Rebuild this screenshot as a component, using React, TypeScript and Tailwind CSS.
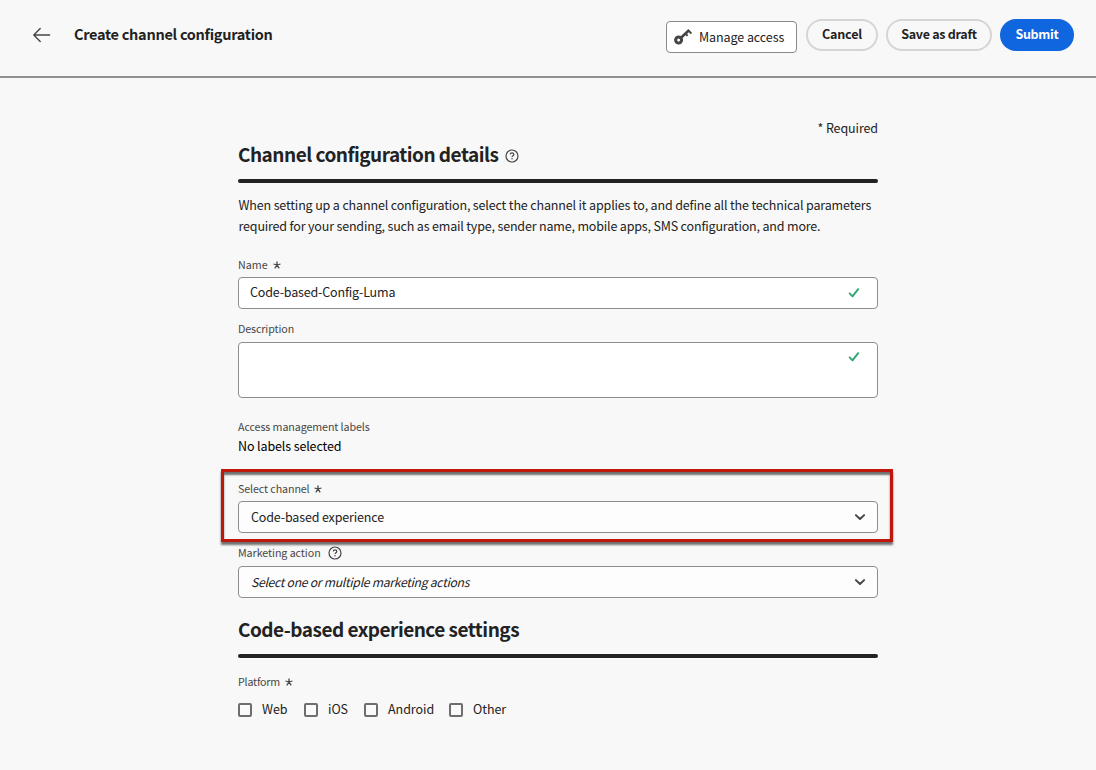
import type { ReactNode } from "react";

function HelpIcon({ className }: { className: string }) {
  return (
    <svg viewBox="0 0 14 14" className={className} fill="none" stroke="currentColor">
      <circle cx="7" cy="7" r="6" strokeWidth="1.2" />
      <path d="M5.2 5.4C5.3 4.4 6 3.9 7 3.9s1.8.6 1.8 1.5c0 1.3-1.8 1.3-1.8 2.7" strokeWidth="1.2" />
      <circle cx="7" cy="9.8" r=".75" fill="currentColor" stroke="none" />
    </svg>
  );
}

function Asterisk() {
  return (
    <svg viewBox="0 0 8 8" className="size-2 text-[#464646]" fill="none" stroke="currentColor" strokeWidth="1.3">
      <path d="M4 4V.4M4 4L.5 3M4 4l3.5-1M4 4L1.8 7.3M4 4l2.2 3.3" />
    </svg>
  );
}

function Check() {
  return (
    <svg viewBox="0 0 12 10" className="h-[10px] w-3 shrink-0" fill="none" stroke="#2da672" strokeWidth="1.9" strokeLinecap="round" strokeLinejoin="round">
      <path d="M1.7 5.4l2.8 3L10.2 1.2" />
    </svg>
  );
}

function Chevron() {
  return (
    <svg viewBox="0 0 12 8" className="h-2 w-3 shrink-0" fill="none" stroke="#464646" strokeWidth="2" strokeLinecap="round" strokeLinejoin="round">
      <path d="M1.9 2.1L6 6l4.1-3.9" />
    </svg>
  );
}

function Label({ children, className = "", mark }: { children: ReactNode; className?: string; mark?: ReactNode }) {
  return (
    <div className={"flex h-4 items-center text-[10.7px] leading-4 text-[#464646] " + className}>
      <span>{children}</span>
      {mark}
    </div>
  );
}

function Section({ title, icon }: { title: string; icon?: ReactNode }) {
  return (
    <>
      <div className="flex h-6 items-center gap-[7px]">
        <h2 className="pb-[2px] text-[19px] leading-6 font-bold tracking-[-0.51px] text-[#222]">{title}</h2>
        {icon}
      </div>
      <div className="mt-3 h-1 rounded-sm bg-[#222]" />
    </>
  );
}

function Select({ children, className = "" }: { children: ReactNode; className?: string }) {
  return (
    <button className={"flex h-8 w-full items-center justify-between rounded-[4px] border border-[#8e8e8e] bg-[#fdfdfd] pr-[11px] pl-3 text-left text-[#222] " + className}>
      <span>{children}</span>
      <Chevron />
    </button>
  );
}

function Box({ label, className = "" }: { label: string; className?: string }) {
  return (
    <label className={"flex items-center gap-[10px] " + className}>
      <span className="size-[14px] rounded-[2px] border-2 border-[#6e6e6e] bg-[#fafafa]" />
      <span className="pb-[2px] tracking-[-0.05px]">{label}</span>
    </label>
  );
}

export default function App() {
  return (
    <div className="relative h-[770px] w-[1096px] overflow-hidden bg-[#f8f8f8] font-['Noto_Sans_CJK_SC',sans-serif] text-[12.5px] whitespace-nowrap text-[#222]">
      <header className="flex h-[78px] items-start border-b-2 border-[#909090] pl-8">
        <svg viewBox="0 0 20 16" className="mt-[27px] h-4 w-5" fill="none" stroke="#464646" strokeWidth="1.4" strokeLinecap="round" strokeLinejoin="round">
          <path d="M17.6 8H2M8.2 1.6L1.8 8l6.4 6.4" />
        </svg>
        <h1 className="mt-[22px] ml-[22px] text-[14.5px] leading-6 font-bold tracking-[-0.28px]">Create channel configuration</h1>
        <div className="mt-[19px] mr-[22px] ml-auto flex h-8 font-bold">
          <button className="mt-[2px] mr-[9px] flex h-8 w-[131px] items-center rounded-[4px] border border-[#8a8a8a] bg-white pl-[7px] font-normal tracking-[-0.08px]">
            <svg viewBox="0 0 18 16" className="mr-[7px] h-4 w-[18px]" fill="none" stroke="#464646">
              <circle cx="4.6" cy="11" r="3" strokeWidth="3" />
              <path d="M7 8.7L15.2 1" strokeWidth="2.6" />
              <path d="M11.6 4.6l2 2.2M14.6 1.6l2.8 3" strokeWidth="2" />
            </svg>
            Manage access
          </button>
          <button className="mr-2 w-[72px] rounded-full border-2 border-[#d5d5d5] pb-[2px] tracking-[-0.16px]">Cancel</button>
          <button className="mr-2 w-[106px] rounded-full border-2 border-[#d5d5d5] pb-[2px] tracking-[-0.28px]">Save as draft</button>
          <button className="w-[74px] rounded-full bg-[#1066de] pb-[2px] tracking-[-0.3px] text-white">Submit</button>
        </div>
      </header>

      <main className="ml-[238px] w-[640px] pt-10">
        <div className="h-5 text-right leading-5 tracking-[-0.1px]">* Required</div>
        <div className="mt-[5px]">
          <Section title="Channel configuration details" icon={<HelpIcon className="mt-[2px] size-[14px] text-[#464646]" />} />
        </div>
        <div className="mt-[11px] pl-[0.5px] leading-[21px]">
          <p className="tracking-[-0.15px]">When setting up a channel configuration, select the channel it applies to, and define all the technical parameters</p>
          <p className="tracking-[-0.17px]">required for your sending, such as email type, sender name, mobile apps, SMS configuration, and more.</p>
        </div>

        <Label className="mt-[21px] gap-[5px]" mark={<Asterisk />}>Name</Label>
        <div className="mt-1 flex h-8 items-center justify-between rounded-[4px] border border-[#8e8e8e] bg-white pr-[17px] pl-[11px]">
          <span className="pb-[2px] tracking-[-0.17px]">Code-based-Config-Luma</span>
          <Check />
        </div>
        <Label className="mt-3 tracking-[-0.1px]">Description</Label>
        <div className="mt-[5px] flex h-14 justify-end rounded-[4px] border border-[#8e8e8e] bg-white pt-[9px] pr-[17px]">
          <Check />
        </div>

        <Label className="mt-[21px] tracking-[-0.09px] text-[#222]">Access management labels</Label>
        <div className="mt-px h-5 leading-5 tracking-[-0.12px] text-black">No labels selected</div>

        <Label className="mt-[25px] gap-1 tracking-[-0.1px]" mark={<Asterisk />}>Select channel</Label>
        <Select className="mt-1 tracking-[-0.15px]">Code-based experience</Select>
        <Label className="mt-3 gap-[7px] tracking-[-0.06px]" mark={<HelpIcon className="size-[14px]" />}>Marketing action</Label>
        <Select className="mt-[5px] text-[12.2px] tracking-[-0.29px] italic">Select one or multiple marketing actions</Select>

        <div className="mt-5">
          <Section title="Code-based experience settings" />
        </div>
        <Label className="mt-4 gap-[5px] tracking-[-0.2px]" mark={<Asterisk />}>Platform</Label>
        <div className="mt-[10px] flex h-5">
          <Box label="Web" className="w-[66px]" />
          <Box label="iOS" className="w-[60px]" />
          <Box label="Android" className="w-[85px]" />
          <Box label="Other" />
        </div>
      </main>

      <div className="pointer-events-none absolute top-[469px] left-[221px] h-[73px] w-[672px] border-[3px] border-[#c0170c] shadow-[0_3px_2px_rgba(0,0,0,0.55),inset_0_3px_2px_rgba(0,0,0,0.55)]" />
    </div>
  );
}
